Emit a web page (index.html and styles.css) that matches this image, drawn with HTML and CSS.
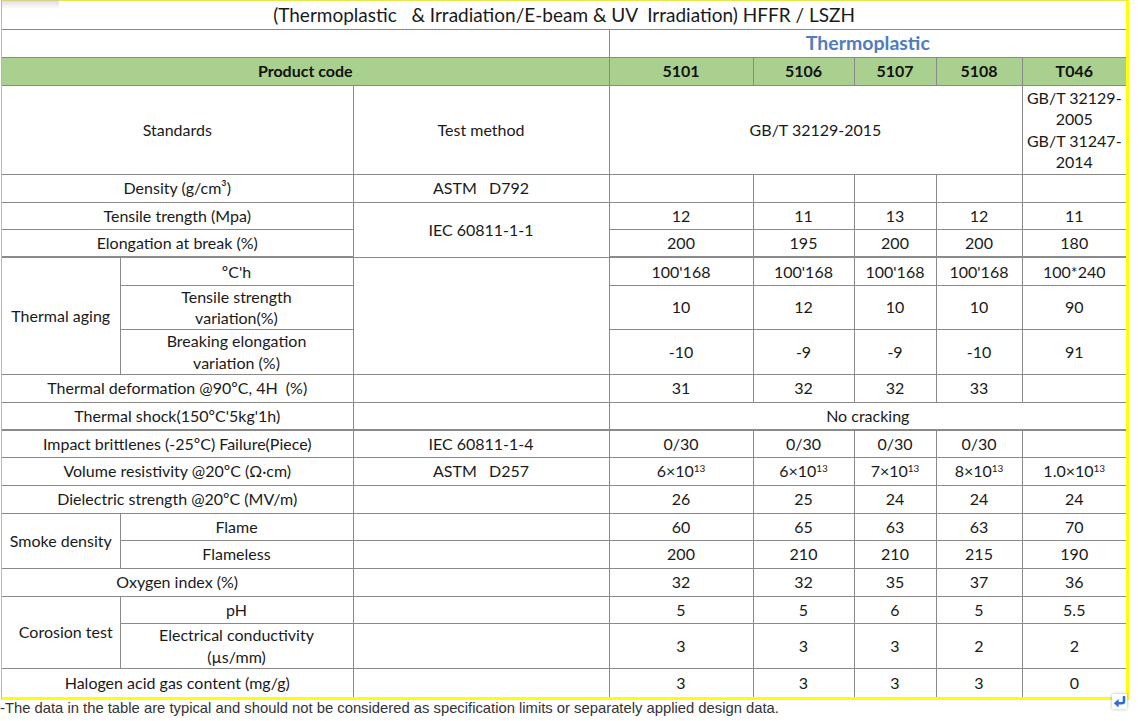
FILE: index.html
```html
<!DOCTYPE html>
<html>
<head>
<meta charset="utf-8">
<link rel="stylesheet" href="styles.css">
</head>
<body>
<div class="frame">
  <div class="tab-shadow"></div>
  <table class="spec">
    <colgroup>
      <col class="c1"><col class="c2"><col class="c3"><col class="c4"><col class="c5"><col class="c6"><col class="c7"><col class="c8">
    </colgroup>
    <tr class="h28 r-title">
      <td colspan="8" class="title">(Thermoplastic   &amp; Irradiation/E-beam &amp; UV  Irradiation) HFFR / LSZH</td>
    </tr>
    <tr class="h28">
      <td colspan="3"></td>
      <td colspan="5" class="family">Thermoplastic</td>
    </tr>
    <tr class="h28 green">
      <td colspan="3">Product code</td>
      <td>5101</td><td>5106</td><td>5107</td><td>5108</td><td>T046</td>
    </tr>
    <tr class="h89">
      <td colspan="2">Standards</td>
      <td>Test method</td>
      <td colspan="4">GB/T 32129-2015</td>
      <td class="nowrap">GB/T 32129-<br>2005<br>GB/T 31247-<br>2014</td>
    </tr>
    <tr class="h28">
      <td colspan="2">Density (g/cm³)</td>
      <td>ASTM   D792</td>
      <td></td><td></td><td></td><td></td><td></td>
    </tr>
    <tr class="h27">
      <td colspan="2">Tensile trength (Mpa)</td>
      <td rowspan="2">IEC 60811-1-1</td>
      <td>12</td><td>11</td><td>13</td><td>12</td><td>11</td>
    </tr>
    <tr class="h28 thick">
      <td colspan="2">Elongation at break (%)</td>
      <td>200</td><td>195</td><td>200</td><td>200</td><td>180</td>
    </tr>
    <tr class="h28">
      <td rowspan="3">Thermal aging</td>
      <td>ºC'h</td>
      <td rowspan="3"></td>
      <td>100'168</td><td>100'168</td><td>100'168</td><td>100'168</td><td>100*240</td>
    </tr>
    <tr class="h44">
      <td>Tensile strength<br>variation(%)</td>
      <td>10</td><td>12</td><td>10</td><td>10</td><td>90</td>
    </tr>
    <tr class="h45">
      <td>Breaking elongation<br>variation (%)</td>
      <td>-10</td><td>-9</td><td>-9</td><td>-10</td><td>91</td>
    </tr>
    <tr class="h28">
      <td colspan="2">Thermal deformation @90ºC, 4H  (%)</td>
      <td></td>
      <td>31</td><td>32</td><td>32</td><td>33</td><td></td>
    </tr>
    <tr class="h28 thick">
      <td colspan="2">Thermal shock(150ºC'5kg'1h)</td>
      <td></td>
      <td colspan="5">No cracking</td>
    </tr>
    <tr class="h27">
      <td colspan="2">Impact brittlenes (-25ºC) Failure(Piece)</td>
      <td>IEC 60811-1-4</td>
      <td>0/30</td><td>0/30</td><td>0/30</td><td>0/30</td><td></td>
    </tr>
    <tr class="h28">
      <td colspan="2">Volume resistivity @20ºC (Ω·cm)</td>
      <td>ASTM   D257</td>
      <td>6×10<sup>13</sup></td><td>6×10<sup>13</sup></td><td>7×10<sup>13</sup></td><td>8×10<sup>13</sup></td><td>1.0×10<sup>13</sup></td>
    </tr>
    <tr class="h28">
      <td colspan="2">Dielectric strength @20ºC (MV/m)</td>
      <td></td>
      <td>26</td><td>25</td><td>24</td><td>24</td><td>24</td>
    </tr>
    <tr class="h27">
      <td rowspan="2">Smoke density</td>
      <td>Flame</td>
      <td></td>
      <td>60</td><td>65</td><td>63</td><td>63</td><td>70</td>
    </tr>
    <tr class="h28">
      <td>Flameless</td>
      <td></td>
      <td>200</td><td>210</td><td>210</td><td>215</td><td>190</td>
    </tr>
    <tr class="h28">
      <td colspan="2">Oxygen index (%)</td>
      <td></td>
      <td>32</td><td>32</td><td>35</td><td>37</td><td>36</td>
    </tr>
    <tr class="h27">
      <td rowspan="2" class="shift">Corosion test</td>
      <td>pH</td>
      <td></td>
      <td>5</td><td>5</td><td>6</td><td>5</td><td>5.5</td>
    </tr>
    <tr class="h45">
      <td>Electrical conductivity<br>(µs/mm)</td>
      <td></td>
      <td>3</td><td>3</td><td>3</td><td>2</td><td>2</td>
    </tr>
    <tr class="h29 last">
      <td colspan="2">Halogen acid gas content (mg/g)</td>
      <td></td>
      <td>3</td><td>3</td><td>3</td><td>3</td><td>0</td>
    </tr>
  </table>
  <div class="return-btn">
    <svg width="13" height="12" viewBox="0 0 13 12"><path d="M11 1 V5 Q11 7.2 8.8 7.2 H5" fill="none" stroke="#2b6fd2" stroke-width="2.6" stroke-linecap="round"/><path d="M0.8 7.2 L5.6 3 V11.4 Z" fill="#2b6fd2"/></svg>
  </div>
</div>
<p class="note">-The data in the table are typical and should not be considered as specification limits or separately applied design data.</p>
</body>
</html>
```

FILE: styles.css
```css
html, body {
  margin: 0;
  padding: 0;
  background: #ffffff;
}

.frame {
  position: relative;
  width: 1124px;
  margin-left: 1px;
  border-top: 1px solid #e8e84a;
  border-left: 1px solid #c9c93a;
  border-right: 3px solid #ffff00;
  border-bottom: 3px solid #ffff00;
}

.tab-shadow {
  position: absolute;
  left: -1px;
  top: -1px;
  width: 58px;
  height: 9px;
  background: linear-gradient(to bottom, rgba(190,190,190,0.55), rgba(255,255,255,0));
}

.spec {
  border-collapse: collapse;
  table-layout: fixed;
  width: 1124px;
  font-family: Lato, "Open Sans", sans-serif;
  font-size: 16px;
  color: #1a1a1a;
}

.c1 { width: 118px; }
.c2 { width: 233px; }
.c3 { width: 256px; }
.c4 { width: 144px; }
.c5 { width: 101px; }
.c6 { width: 82px; }
.c7 { width: 86px; }
.c8 { width: 104px; }

.spec td {
  border: 1px solid #8a8a8a;
  text-align: center;
  vertical-align: middle;
  padding: 0;
  line-height: 21.5px;
  white-space: pre-wrap;
}

.spec td.nowrap { white-space: nowrap; }

.spec tr td:first-child { border-left: none; }
.spec tr td:last-child { border-right: none; }
.spec tr.r-title td { border-top: none; }
.spec tr.last td { border-bottom: none; }

.h27 { height: 27px; }
.h28 { height: 28px; }
.h29 { height: 29px; }
.h44 { height: 44px; }
.h45 { height: 45px; }
.h89 { height: 89px; }

.spec td.title {
  font-size: 19px;
  white-space: pre;
  color: #1a1a1a;
}

.spec td.family {
  font-size: 19.5px;
  font-weight: bold;
  color: #4f7cc1;
}

.green td {
  background: #a9d08e;
  font-weight: bold;
  color: #111111;
}

.spec tr.thick td { border-bottom: 2px solid #8a8a8a; }

.spec td.shift { padding-left: 10px; }

.spec sup {
  font-size: 10px;
  line-height: 0;
  vertical-align: 5px;
}

.return-btn {
  position: absolute;
  right: -1px;
  bottom: -12px;
  width: 15px;
  height: 15px;
  background: #ffffff;
  box-shadow: 0 0 3px rgba(0,0,0,0.3);
  display: flex;
  align-items: center;
  justify-content: center;
}

.note {
  margin: 0;
  font-family: "Liberation Sans", Arial, sans-serif;
  font-size: 14.8px;
  line-height: 17px;
  color: #333333;
}
```
